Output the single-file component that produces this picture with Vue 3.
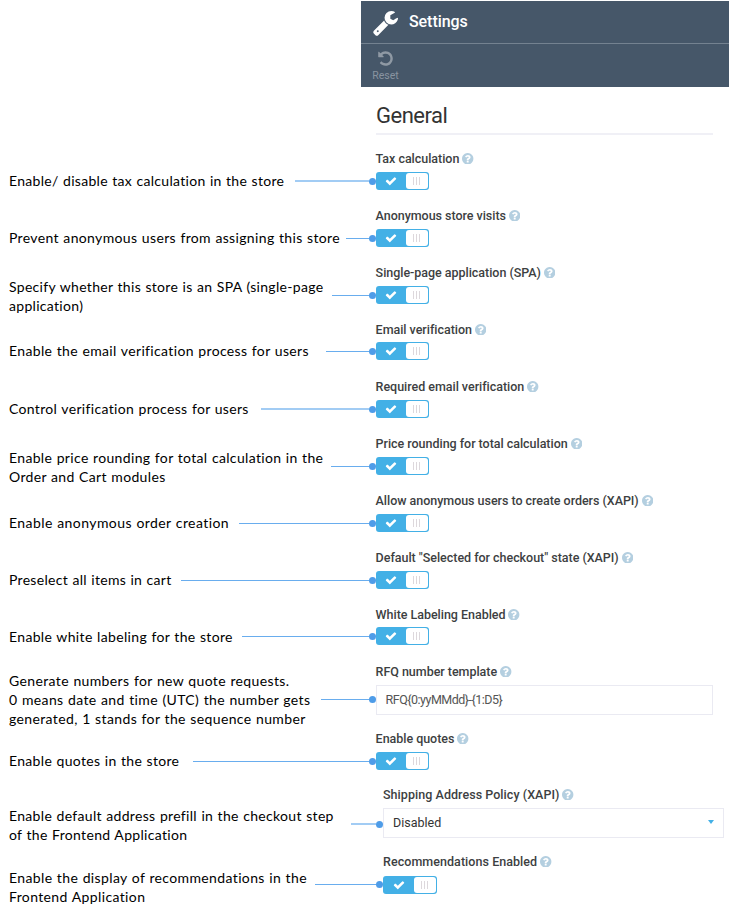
<script setup>
const rows = [
  { label: 'Tax calculation', note: ['Enable/ disable tax calculation in the store'], height: 57, noteTop: 21, lineTop: 30, start: 295, soft: true, tracking: 0.3 },
  { label: 'Anonymous store visits', note: ['Prevent anonymous users from assigning this store'], height: 57, noteTop: 21, lineTop: 31, start: 346, tracking: 0.35 },
  { label: 'Single-page application (SPA)', note: ['Specify whether this store is an SPA (single-page', 'application)'], height: 57, noteTop: 13, lineTop: 31, start: 332, tracking: 0.31 },
  { label: 'Email verification', note: ['Enable the email verification process for users'], height: 57, noteTop: 20, lineTop: 30, start: 326, raised: true, tracking: 0.35 },
  { label: 'Required email verification', note: ['Control verification process for users'], height: 57, noteTop: 21, lineTop: 30, start: 261, soft: true, tracking: 0.33 },
  { label: 'Price rounding for total calculation', note: ['Enable price rounding for total calculation in the', 'Order and Cart modules'], height: 57, noteTop: 13, lineTop: 31, start: 331, tracking: 0.34 },
  { label: 'Allow anonymous users to create orders (XAPI)', note: ['Enable anonymous order creation'], height: 57, noteTop: 21, lineTop: 31, start: 239, tracking: 0.42 },
  { label: 'Default "Selected for checkout" state (XAPI)', note: ['Preselect all items in cart'], height: 57, noteTop: 21, lineTop: 31, start: 181, tracking: 0.3 },
  { label: 'White Labeling Enabled', note: ['Enable white labeling for the store'], height: 57, noteTop: 21, lineTop: 30, start: 242, raised: true, tracking: 0.34 },
  { label: 'RFQ number template', type: 'input', value: 'RFQ{0:yyMMdd}-{1:D5}', note: ['Generate numbers for new quote requests.', '0 means date and time (UTC) the number gets', 'generated, 1 stands for the sequence number'], height: 67, noteTop: 8, lineTop: 36, start: 321, tracking: 0.37 },
  { label: 'Enable quotes', note: ['Enable quotes in the store'], height: 56, noteTop: 21, lineTop: 31, start: 193, tracking: 0.32 },
  { label: 'Shipping Address Policy (XAPI)', type: 'select', value: 'Disabled', indent: true, note: ['Enable default address prefill in the checkout step', 'of the Frontend Application'], height: 67, noteTop: 20, lineTop: 37, start: 351, soft: true, tracking: 0.32 },
  { label: 'Recommendations Enabled', indent: true, note: ['Enable the display of recommendations in the', 'Frontend Application'], height: 60, noteTop: 15, lineTop: 31, start: 315, tracking: 0.37 },
]
const vars = (r) => ({
  '--row-height': r.height + 'px',
  '--note-top': r.noteTop + 'px',
  '--line-top': r.lineTop + 'px',
  '--line-start': r.start + 'px',
  '--tracking': r.tracking + 'px',
})
</script>

<template>
  <main class="page">
    <header class="blade">
      <div class="title-bar">
        <svg class="wrench" viewBox="0 0 1792 1792"><path d="M448 1472q0-26-19-45t-45-19-45 19-19 45 19 45 45 19 45-19 19-45zm644-420l-682 682q-37 37-90 37-52 0-91-37l-106-108q-38-36-38-90 0-53 38-91l681-681q39 98 114.500 173.500t173.500 114.500zm634-435q0 39-23 106-47 134-164.500 217.500t-258.500 83.500q-185 0-316.500-131.500t-131.500-316.500 131.500-316.500 316.500-131.500q58 0 121.500 16.500t107.500 46.500q16 11 16 28t-16 28l-293 169v224l193 107q5-3 79-48.500t135.500-81 70.500-35.500q15 0 23.500 10t8.500 25z" /></svg>
        <h1>Settings</h1>
      </div>
      <div class="toolbar">
        <button class="reset">
          <svg viewBox="0 0 1792 1792"><path d="M1664 896q0 156-61 298t-164 245-245 164-298 61q-172 0-327-72.500t-264-204.500q-7-10-6.500-22.500t8.500-20.500l137-138q10-9 25-9 16 2 23 12 73 95 179 147t225 52q104 0 198.500-40.500t163.500-109.500 109.500-163.500 40.500-198.500-40.500-198.500-109.500-163.500-163.500-109.500-198.500-40.500q-98 0-188 35.500t-160 101.500l137 138q31 30 14 69-17 40-59 40h-448q-26 0-45-19t-19-45v-448q0-42 40-59 39-17 69 14l130 129q107-101 244.500-156.500t284.500-55.500q156 0 298 61t245 164 164 245 61 298z" /></svg>
          <span>Reset</span>
        </button>
      </div>
    </header>

    <h2>General</h2>

    <section v-for="r in rows" :key="r.label" class="row" :class="{ indent: r.indent, raised: r.raised, soft: r.soft }" :style="vars(r)">
      <div class="callout">
        <p class="note"><span v-for="t in r.note" :key="t">{{ t }}</span></p>
        <i class="line"></i>
        <i class="dot"></i>
      </div>
      <div class="field">
        <div class="label">
          <span>{{ r.label }}</span>
          <svg class="help" viewBox="128 128 1536 1536"><path d="M1024 1376v-192q0-14-9-23t-23-9h-192q-14 0-23 9t-9 23v192q0 14 9 23t23 9h192q14 0 23-9t9-23zm256-672q0-88-55.500-163t-138.500-116-170-41q-243 0-371 213-15 24 8 42l132 100q7 6 19 6 16 0 25-12 53-68 86-92 34-24 86-24 48 0 85.500 26t37.500 59q0 38-20 61t-68 45q-63 28-115.500 86.500t-52.500 125.500v36q0 14 9 23t23 9h192q14 0 23-9t9-23q0-19 21.500-49.500t54.500-49.500q32-18 49-28.500t46-35 44.500-48 28-60.500 12.500-81zm384 192q0 209-103 385.500t-279.500 279.500-385.500 103-385.500-103-279.500-279.500-103-385.500 103-385.500 279.500-279.500 385.500-103 385.500 103 279.500 279.500 103 385.500z" /></svg>
        </div>
        <div v-if="r.type === 'input'" class="box input">{{ r.value }}</div>
        <div v-else-if="r.type === 'select'" class="box select"><span>{{ r.value }}</span><i class="caret"></i></div>
        <div v-else class="toggle">
          <div class="on"><svg viewBox="0 0 1792 1792"><path d="M1671 566q0 40-28 68l-724 724-136 136q-28 28-68 28t-68-28l-136-136-362-362q-28-28-28-68t28-68l136-136q28-28 68-28t68 28l294 295 656-657q28-28 68-28t68 28l136 136q28 28 28 68z" /></svg></div>
          <div class="knob"><i></i><i></i><i></i></div>
        </div>
      </div>
    </section>
  </main>
</template>

<style>
body {
  background: #fff;
}
</style>

<style scoped>
.page {
  width: 737px;
  height: 915px;
  overflow: hidden;
  box-sizing: border-box;
  padding-top: 1px;
  font-family: Roboto, "Liberation Sans", sans-serif;
  color: #3d3f42;
}
.blade {
  width: 368px;
  height: 86px;
  margin-left: 361px;
  background: #465769;
}
.title-bar {
  box-sizing: border-box;
  height: 43px;
  border-bottom: 1px solid #748290;
  display: flex;
  align-items: flex-start;
  padding: 8px 0 0 11px;
}
.wrench {
  width: 27px;
  height: 27px;
  fill: #fff;
}
h1 {
  margin: 3px 0 0 10px;
  font-size: 16px;
  line-height: 20px;
  font-weight: 500;
  letter-spacing: -0.07px;
  color: #fff;
}
.toolbar {
  display: flex;
  padding: 6px 0 0 11px;
}
.reset {
  display: flex;
  flex-direction: column;
  align-items: center;
  border: 0;
  padding: 0;
  width: 27px;
  background: none;
  color: #8994a0;
  font: 400 10.5px/13px Roboto, sans-serif;
}
.reset svg {
  width: 17px;
  height: 17px;
  fill: #8f99a4;
  margin-bottom: 2px;
}
h2 {
  box-sizing: border-box;
  width: 337px;
  height: 48px;
  margin: 0 0 15px 376px;
  padding-top: 15px;
  border-bottom: 2px solid #f0f0f6;
  font-size: 22px;
  line-height: 28px;
  font-weight: 400;
  letter-spacing: -0.5px;
  color: #333;
}
.row {
  display: flex;
  align-items: flex-start;
  height: var(--row-height);
}
.callout {
  flex: none;
  display: flex;
  align-items: flex-start;
  width: 375.6px;
}
.indent .callout {
  width: 383px;
}
.note {
  flex: none;
  box-sizing: border-box;
  width: var(--line-start);
  margin: var(--note-top) 0 0;
  padding-left: 9px;
  font: 400 14px/19px Lato, "Liberation Sans", sans-serif;
  letter-spacing: var(--tracking);
  word-spacing: 0.5px;
  color: #000;
}
.note span {
  display: block;
  white-space: nowrap;
}
.line {
  flex: 1;
  height: 1px;
  margin-top: var(--line-top);
  background: #69adee;
}
.soft .line {
  height: 2px;
  background: #a2ccf4;
}
.dot {
  width: 7px;
  height: 7px;
  border-radius: 50%;
  margin-top: calc(var(--line-top) - 3px);
  background: #4e9ce8;
}
.soft .dot {
  margin-top: calc(var(--line-top) - 2px);
}
.label {
  display: flex;
  align-items: center;
  gap: 3px;
  height: 17px;
  font-size: 12.5px;
  font-weight: 500;
  letter-spacing: -0.03px;
  white-space: nowrap;
}
.indent .label {
  letter-spacing: 0.05px;
}
.help {
  width: 11.4px;
  height: 11.4px;
  fill: #b4cfe0;
}
.toggle {
  display: flex;
  box-sizing: border-box;
  width: 53px;
  height: 18px;
  margin-top: 5px;
  padding: 1px;
  border-radius: 3px;
  background: #43b0e6;
}
.raised .toggle {
  margin-top: 4px;
}
.indent .toggle {
  width: 54px;
  margin-top: 6px;
}
.on {
  flex: 1;
  display: flex;
  align-items: center;
  justify-content: center;
  padding-bottom: 1px;
}
.on svg {
  width: 12px;
  height: 12px;
  fill: #fff;
}
.knob {
  box-sizing: border-box;
  display: flex;
  align-items: center;
  justify-content: center;
  gap: 2px;
  width: 22px;
  padding: 0 1px 1px 0;
  border-radius: 3px;
  background: #fff;
}
.knob i {
  width: 1px;
  height: 8px;
  background: #ddd8dc;
}
.box {
  box-sizing: border-box;
  height: 30px;
  margin-top: 5px;
  border: 1px solid #eaeaf2;
  padding: 0 9px;
  font-size: 12.5px;
  line-height: 27px;
}
.input {
  width: 337.4px;
  letter-spacing: -0.5px;
  color: #555;
}
.select {
  display: flex;
  align-items: center;
  justify-content: space-between;
  width: 341px;
  padding-bottom: 2px;
  color: #333;
}
.caret {
  border: 3px solid transparent;
  border-top: 4px solid #43b0e6;
  border-bottom: 0;
}
</style>
